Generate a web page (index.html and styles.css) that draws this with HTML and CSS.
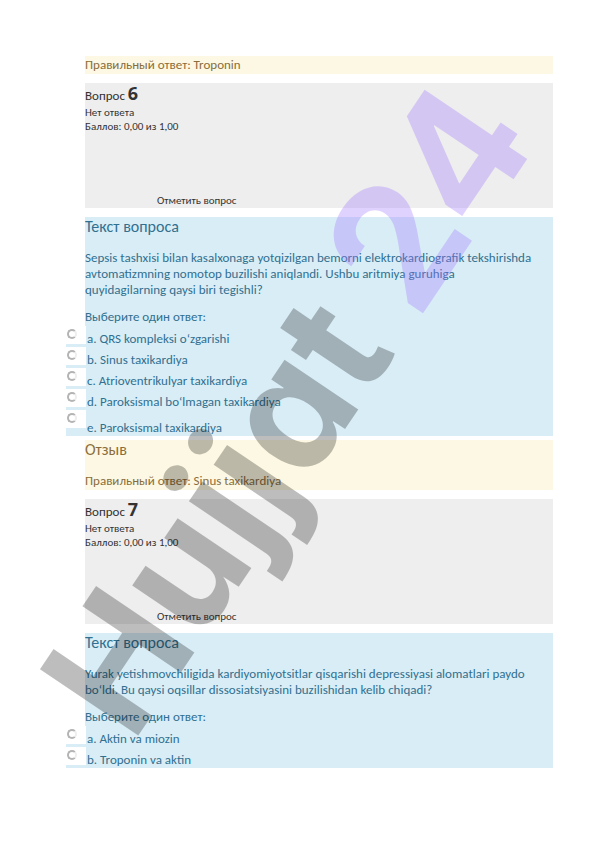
FILE: index.html
```html
<!DOCTYPE html>
<html lang="ru">
<head>
    <meta charset="UTF-8">
    <meta name="viewport" content="width=device-width, initial-scale=1.0">
    <title>Hujjat 24</title>
    <link rel="stylesheet" href="styles.css">
</head>
<body>

<main class="page">
    <section class="feedback">
        <p class="right-answer">Правильный ответ: Troponin</p>
    </section>

    <section class="info">
        <h3 class="number">Вопрос <span class="qno">6</span></h3>
        <p class="state">Нет ответа</p>
        <p class="grade">Баллов: 0,00 из 1,00</p>
        <button class="flag" type="button">Отметить вопрос</button>
    </section>

    <section class="question">
        <h4 class="title">Текст вопроса</h4>
        <p class="text">Sepsis tashxisi bilan kasalxonaga yotqizilgan bemorni elektrokardiografik tekshirishda avtomatizmning nomotop buzilishi aniqlandi. Ushbu aritmiya guruhiga<br>quyidagilarning qaysi biri tegishli?</p>
        <p class="prompt">Выберите один ответ:</p>
        <div class="answers">
            <div class="answer">
                <span class="tick"><input type="radio" name="q6" id="q6a"></span>
                <label for="q6a">a. QRS kompleksi oʻzgarishi</label>
            </div>
            <div class="answer">
                <span class="tick"><input type="radio" name="q6" id="q6b"></span>
                <label for="q6b">b. Sinus taxikardiya</label>
            </div>
            <div class="answer">
                <span class="tick"><input type="radio" name="q6" id="q6c"></span>
                <label for="q6c">c. Atrioventrikulyar taxikardiya</label>
            </div>
            <div class="answer">
                <span class="tick"><input type="radio" name="q6" id="q6d"></span>
                <label for="q6d">d. Paroksismal boʻlmagan taxikardiya</label>
            </div>
            <div class="answer last">
                <span class="tick"><input type="radio" name="q6" id="q6e"></span>
                <label for="q6e">e. Paroksismal taxikardiya</label>
            </div>
        </div>
    </section>

    <section class="feedback joined">
        <h4 class="title">Отзыв</h4>
        <p class="right-answer">Правильный ответ: Sinus taxikardiya</p>
    </section>

    <section class="info">
        <h3 class="number">Вопрос <span class="qno">7</span></h3>
        <p class="state">Нет ответа</p>
        <p class="grade">Баллов: 0,00 из 1,00</p>
        <button class="flag" type="button">Отметить вопрос</button>
    </section>

    <section class="question">
        <h4 class="title">Текст вопроса</h4>
        <p class="text">Yurak yetishmovchiligida kardiyomiyotsitlar qisqarishi depressiyasi alomatlari paydo boʻldi. Bu qaysi oqsillar dissosiatsiyasini buzilishidan kelib chiqadi?</p>
        <p class="prompt">Выберите один ответ:</p>
        <div class="answers">
            <div class="answer">
                <span class="tick"><input type="radio" name="q7" id="q7a"></span>
                <label for="q7a">a. Aktin va miozin</label>
            </div>
            <div class="answer">
                <span class="tick"><input type="radio" name="q7" id="q7b"></span>
                <label for="q7b">b. Troponin va aktin</label>
            </div>
        </div>
    </section>
</main>

<!-- watermark -->
<svg class="watermark" viewBox="0 0 596 842">
    <g transform="translate(140 733) rotate(-56)">
        <text class="mark-name" x="-14" y="0">Hujjat</text>
        <text class="mark-num" x="496" y="0">24</text>
    </g>
</svg>

</body>
</html>
```
FILE: styles.css
```css
* {
    box-sizing: border-box;
}
body {
    margin: 0;
    position: relative;
    background-color: #fff;
    font-family: Carlito, Lato, "Open Sans", sans-serif;
    font-size: 13px;
    line-height: 16px;
    color: #333;
}
h3, h4, p {
    margin: 0;
    font-weight: normal;
}
.page {
    display: flex;
    flex-direction: column;
    gap: 9px;
    padding: 56px 43px 74px 85px;
}
.title {
    font-size: 16px;
    line-height: 20px;
}

/* feedback */
.feedback {
    background-color: #fcf8e3;
    color: #8a6d3b;
}
.feedback .right-answer {
    line-height: 18px;
}
.feedback.joined {
    margin-top: -5px;
}
.joined .title {
    margin-bottom: 12px;
}

/* question info */
.info {
    display: flex;
    flex-direction: column;
    align-items: flex-start;
    height: 125px;
    padding-top: 2px;
    background-color: #eee;
    font-size: 11px;
    line-height: 14px;
}
.number {
    font-size: 13px;
    line-height: 20px;
}
.qno {
    font-family: "Open Sans", sans-serif;
    font-size: 18px;
    line-height: 16px;
    font-weight: bold;
}
.flag {
    margin: auto 0 0 72px;
    padding: 0;
    border: none;
    background: none;
    font: inherit;
    color: inherit;
    cursor: pointer;
}

/* question body */
.question {
    background-color: #d9edf7;
    color: #31708f;
}
.question .title {
    margin-bottom: 13px;
}
.prompt {
    margin: 11px 0 1px;
}
.answers {
    margin-left: -19px;
}
.answer {
    display: flex;
    align-items: flex-end;
    height: 21px;
}
.answer.last {
    height: 26px;
    background: linear-gradient(#d9edf7, #d9edf7) bottom / 100% 8px no-repeat;
}
.tick {
    align-self: flex-start;
    width: 20px;
    height: 21px;
    background-color: #fff;
    border-bottom: 3px solid #d9edf7;
}
.tick input {
    appearance: none;
    display: block;
    width: 10px;
    height: 10px;
    margin: 3px 0 0 1px;
    border: 2px solid #b4b4b4;
    border-right-color: #eee;
    border-radius: 50%;
}
.answer label {
    padding-left: 1px;
}

/* watermark */
.watermark {
    position: absolute;
    top: 0;
    left: 0;
    width: 100%;
    pointer-events: none;
    font-family: Inter, sans-serif;
    font-weight: bold;
    font-feature-settings: "cv11";
}
.mark-name {
    font-size: 163px;
    fill: rgba(0, 0, 0, 0.26);
}
.mark-num {
    font-size: 170px;
    fill: rgba(160, 115, 255, 0.32);
}
```
